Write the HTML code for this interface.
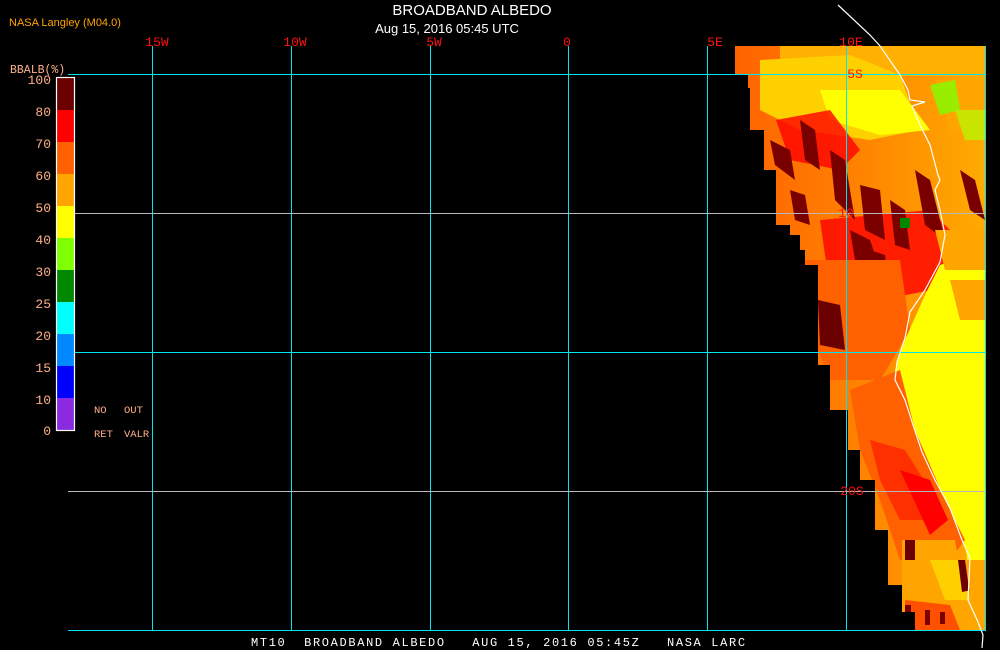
<!DOCTYPE html>
<html><head><style>
html,body{margin:0;padding:0;background:#000;width:1000px;height:650px;overflow:hidden}
svg{display:block}
text{font-family:"Liberation Sans",sans-serif}
.m{font-family:"Liberation Mono",monospace}
</style></head><body>
<svg width="1000" height="650" viewBox="0 0 1000 650" xmlns="http://www.w3.org/2000/svg">
<defs>
<clipPath id="dc">
<polygon points="735,46 985,46 985,630 915,630 915,612 902,612 902,585 888,585 888,530 875,530 875,480 860,480 860,450 848,450 848,410 830,410 830,365 818,365 818,265 805,265 805,250 800,250 800,235 790,235 790,225 776,225 776,170 764,170 764,130 750,130 750,88 748,88 748,74 735,74"/>
</clipPath>
<linearGradient id="g1" x1="0" y1="0" x2="1" y2="0">
<stop offset="0" stop-color="#ff5a00"/><stop offset="0.5" stop-color="#ff8000"/><stop offset="1" stop-color="#ffb000"/>
</linearGradient>
</defs>
<g clip-path="url(#dc)">
<rect x="700" y="40" width="300" height="600" fill="url(#g1)"/>
<rect x="780" y="46" width="205" height="30" fill="#ffb000"/>
<polygon points="760,60 850,55 900,75 920,130 870,140 800,130 760,110" fill="#ffd000"/>
<polygon points="820,90 900,90 930,130 880,135 830,120" fill="#ffff00"/>
<polygon points="935,80 985,80 985,130 950,130" fill="#ffa500"/>
<polygon points="930,85 955,80 960,110 940,115" fill="#80ff00" opacity="0.8"/>
<polygon points="955,110 985,110 985,140 965,140" fill="#b0ff00" opacity="0.7"/>
<g fill="#ff0000" opacity="0.8">
<polygon points="776,120 830,110 860,150 840,170 790,160"/>
<polygon points="820,220 930,210 980,260 985,280 880,300 830,290"/>
</g>
<g fill="#7a0000">
<polygon points="770,140 790,150 795,180 775,165"/>
<polygon points="800,120 815,130 820,170 805,160"/>
<polygon points="830,150 845,160 855,220 835,200"/>
<polygon points="860,185 880,190 885,240 865,230"/>
<polygon points="890,200 905,210 910,250 895,245"/>
<polygon points="915,170 930,180 945,240 925,225"/>
<polygon points="960,170 975,180 985,220 970,210"/>
<polygon points="850,230 870,240 880,270 855,260"/>
<polygon points="790,190 805,195 810,225 795,220"/>
<polygon points="870,250 885,255 890,290 875,285"/>
</g>
<polygon points="800,260 900,260 910,330 880,380 830,380 810,330" fill="#ff6000"/>
<polygon points="818,300 840,305 845,350 820,345" fill="#6b0000"/>
<polygon points="940,265 985,250 985,630 978,630 965,545 950,510 935,480 920,450 905,400 895,370 905,340 925,295" fill="#ffff00"/>
<polygon points="935,230 985,230 985,270 945,270" fill="#ffa500"/>
<polygon points="950,280 985,280 985,320 960,320" fill="#ffa500"/>
<polygon points="850,390 900,370 915,430 945,500 965,540 950,560 900,560 880,500 860,450" fill="#ff6000"/>
<polygon points="870,440 905,450 930,490 930,520 900,520 880,480" fill="#ff3000"/>
<polygon points="900,470 930,480 948,520 930,535" fill="#ff0000"/>
<polygon points="902,540 955,540 965,600 960,630 902,630" fill="#ffa500"/>
<polygon points="930,560 960,560 970,600 945,600" fill="#ffd000"/>
<polygon points="958,560 970,560 972,590 962,592" fill="#6b0000"/>
<polygon points="905,600 950,605 960,630 905,630" fill="#ff5000"/>
<g fill="#7a0000"><rect x="905" y="605" width="6" height="15"/><rect x="925" y="610" width="5" height="15"/><rect x="940" y="612" width="5" height="12"/></g>
<polygon points="965,560 985,560 985,630 975,630" fill="#ffa500"/>
<rect x="905" y="540" width="10" height="20" fill="#6b0000"/>
<rect x="900" y="218" width="10" height="10" fill="#008800"/>
</g>
<g stroke="#00e5ee" stroke-width="1">
<line x1="152.5" y1="46" x2="152.5" y2="630"/>
<line x1="291.5" y1="46" x2="291.5" y2="630"/>
<line x1="430.5" y1="46" x2="430.5" y2="630"/>
<line x1="568.5" y1="46" x2="568.5" y2="630"/>
<line x1="707.5" y1="46" x2="707.5" y2="630"/>
<line x1="846.5" y1="46" x2="846.5" y2="630"/>
<line x1="985.5" y1="46" x2="985.5" y2="631"/>
<line x1="68" y1="74.5" x2="986" y2="74.5"/>
<line x1="68" y1="352.5" x2="986" y2="352.5"/>
<line x1="68" y1="630.5" x2="986" y2="630.5"/>
</g>
<g stroke="#b8b8b8" stroke-width="1">
<line x1="68" y1="213.5" x2="986" y2="213.5"/>
<line x1="68" y1="491.5" x2="986" y2="491.5"/>
</g>
<polyline fill="none" stroke="#fff" stroke-width="1.2" points="838,5 870,35 880,46 900,75 908,90 910,100 925,102 912,106 920,125 930,145 938,175 940,180 935,190 940,210 945,235 940,262 925,290 910,312 905,338 897,362 895,380 905,400 913,425 922,452 935,480 950,508 962,540 970,558 968,600 978,622 983,635 982,648"/>
<g>
<rect x="57" y="78" width="17" height="32" fill="#6b0000"/>
<rect x="57" y="110" width="17" height="32" fill="#ff0000"/>
<rect x="57" y="142" width="17" height="32" fill="#ff6000"/>
<rect x="57" y="174" width="17" height="32" fill="#ffa500"/>
<rect x="57" y="206" width="17" height="32" fill="#ffff00"/>
<rect x="57" y="238" width="17" height="32" fill="#80ff00"/>
<rect x="57" y="270" width="17" height="32" fill="#008800"/>
<rect x="57" y="302" width="17" height="32" fill="#00ffff"/>
<rect x="57" y="334" width="17" height="32" fill="#0088ff"/>
<rect x="57" y="366" width="17" height="32" fill="#0000ff"/>
<rect x="57" y="398" width="17" height="32" fill="#8a2be2"/>
<rect x="56.5" y="77.5" width="18" height="353" fill="none" stroke="#fff" stroke-width="1.2"/>
</g>
<g fill="#ffb08a" font-size="13" text-anchor="end">
<text x="51" y="84" class="m">100</text>
<text x="51" y="116" class="m">80</text>
<text x="51" y="148" class="m">70</text>
<text x="51" y="180" class="m">60</text>
<text x="51" y="212" class="m">50</text>
<text x="51" y="244" class="m">40</text>
<text x="51" y="276" class="m">30</text>
<text x="51" y="308" class="m">25</text>
<text x="51" y="340" class="m">20</text>
<text x="51" y="372" class="m">15</text>
<text x="51" y="404" class="m">10</text>
<text x="51" y="435" class="m">0</text>
</g>
<g fill="#ffb08a" font-size="11.5">
<text x="10" y="73" class="m">BBALB(%)</text>
<text x="94" y="413" class="m" font-size="10.5">NO</text><text x="124" y="413" class="m" font-size="10.5">OUT</text>
<text x="94" y="437" class="m" font-size="10.5">RET</text><text x="124" y="437" class="m" font-size="10.5">VALR</text>
</g>
<text x="9" y="26" fill="#ffa500" font-size="11">NASA Langley (M04.0)</text>
<text x="472" y="15" fill="#fff" font-size="15" text-anchor="middle">BROADBAND ALBEDO</text>
<text x="447" y="33" fill="#fff" font-size="13" text-anchor="middle">Aug 15, 2016 05:45 UTC</text>
<g fill="#ff1010" font-size="13" text-anchor="middle">
<text x="157" y="46" class="m">15W</text>
<text x="295" y="46" class="m">10W</text>
<text x="434" y="46" class="m">5W</text>
<text x="567" y="46" class="m">0</text>
<text x="715" y="46" class="m">5E</text>
<text x="851" y="46" class="m">10E</text>
<text x="855" y="78" class="m">5S</text>
<text x="846" y="217" class="m">10</text>
<text x="852" y="495" class="m">20S</text>
</g>
<text x="251" y="646" fill="#fff" font-size="12" class="m" letter-spacing="1.65" xml:space="preserve">MT10  BROADBAND ALBEDO   AUG 15, 2016 05:45Z   NASA LARC</text>
</svg>
</body></html>
